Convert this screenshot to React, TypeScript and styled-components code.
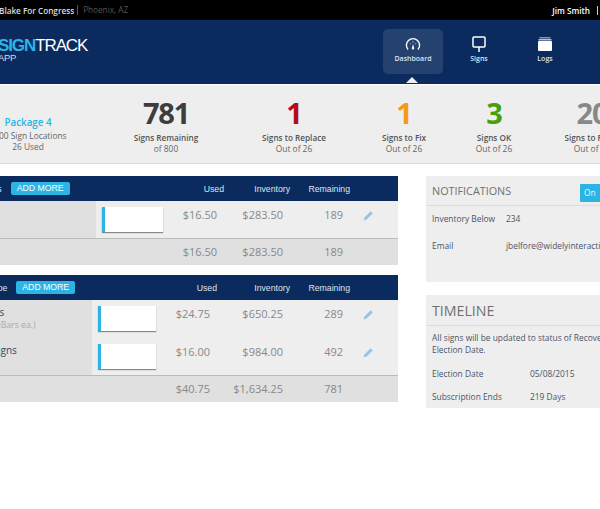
import styled, { createGlobalStyle } from "styled-components";

const GlobalStyle = createGlobalStyle`
  html, body {
    margin: 0;
    padding: 0;
    overflow: hidden;
    background: #fff;
  }
  * { box-sizing: border-box; }
`;

// the layout is wider than the window: it hangs over on both sides
const Page = styled.div`
  width: 740px;
  margin-left: -40px;
  font-family: "Open Sans", "Liberation Sans", sans-serif;
`;

const TopBar = styled.div`
  display: flex;
  align-items: center;
  height: 20px;
  padding: 0 102px 0 39px;
  background: #000;
  font-size: 8.2px;
  color: #fff;
`;

const Campaign = styled.span`
  font-weight: 600;
  color: #ddd;
`;

const Place = styled.span`
  margin-left: 3px;
  padding-left: 5px;
  border-left: 1px solid #555;
  line-height: 10px;
  color: #555;
`;

const UserName = styled.span`
  margin-left: auto;
  margin-right: 7px;
  font-weight: 600;
`;

const UserDivider = styled.span`
  width: 1px;
  height: 9px;
  background: #ccc;
`;

const Header = styled.header`
  display: flex;
  align-items: center;
  justify-content: space-between;
  position: relative;
  height: 64px;
  padding: 0 125px 0 38px;
  background: #0b2a5e;
`;

const Logo = styled.div`
  font-family: "Liberation Sans", Arial, sans-serif;
  color: #fff;
  margin-top: -4px;
`;

const LogoMain = styled.div`
  font-size: 17px;
  line-height: 15px;
  letter-spacing: -1.1px;
  font-weight: 400;

  b {
    color: #2bb4e4;
    font-weight: 700;
  }
`;

const LogoSub = styled.div`
  font-size: 9.5px;
  line-height: 9px;
  letter-spacing: -0.3px;
  color: #d5dbe6;
`;

const Nav = styled.nav`
  display: flex;
  gap: 6px;
  margin-top: -1px;
`;

const NavItem = styled.a<{ $active?: boolean }>`
  display: flex;
  flex-direction: column;
  align-items: center;
  position: relative;
  width: 60px;
  height: 45px;
  padding-top: 7px;
  border-radius: 5px;
  background: ${(p) => (p.$active ? "rgba(255,255,255,0.11)" : "transparent")};
  color: #dfe4ec;
  font-size: 7px;
  font-weight: 600;

  span {
    margin-top: 2px;
    line-height: 10px;
  }

  ${(p) =>
    p.$active &&
    `
    &::after {
      content: "";
      position: absolute;
      left: 23px;
      bottom: -9px;
      border-left: 6px solid transparent;
      border-right: 6px solid transparent;
      border-bottom: 6px solid #eee;
    }
  `}
`;

const Stats = styled.section`
  display: flex;
  height: 80px;
  border-top: 1px solid #fff;
  border-bottom: 1px solid #d9d9d9;
  background: #eee;
`;

const Stat = styled.div<{ $w: number }>`
  display: flex;
  flex-direction: column;
  align-items: center;
  justify-content: flex-end;
  flex: 0 0 ${(p) => p.$w}px;
  padding-bottom: 9px;
  white-space: nowrap;
  font-size: 8.4px;
  line-height: 11px;
  color: #666;
`;

const PackageStat = styled(Stat)`
  padding-bottom: 11px;
`;

const StatNumber = styled.div<{ $color: string }>`
  font-size: 29px;
  font-weight: 700;
  line-height: 34px;
  letter-spacing: -1.2px;
  margin-bottom: 2px;
  color: ${(p) => p.$color};
`;

const StatLabel = styled.div`
  font-size: 8.2px;
  font-weight: 600;
  color: #555;
`;

const PackageName = styled.div`
  font-size: 9.8px;
  font-weight: 600;
  line-height: 14px;
  color: #2bb4e4;
`;

const Body = styled.main`
  display: flex;
  gap: 28px;
  padding-top: 12px;
`;

const LeftColumn = styled.div`
  display: flex;
  flex-direction: column;
  gap: 10px;
  width: 438px;
`;

const RightColumn = styled.div`
  display: flex;
  flex-direction: column;
  gap: 13px;
  width: 274px;
`;

type Columns = { $first: number; $bar: number; $used: number; $inv: number };

const Row = styled.div<Columns>`
  display: grid;
  grid-template-columns: ${(p) => p.$first}px ${(p) => p.$bar}px ${(p) => p.$used}px ${(p) => p.$inv}px 60px 1fr;
  align-items: center;
`;

const HeadRow = styled(Row)`
  height: 25px;
  background: #0b2a5e;
  color: #dfe4ec;
  font-family: "Liberation Sans", Arial, sans-serif;
  font-size: 8.7px;
`;

const HeadTitle = styled.div`
  grid-column: 1 / 3;
  display: flex;
  align-items: center;
  padding-left: 4px;
  white-space: nowrap;
`;

const AddMore = styled.button`
  height: 13px;
  margin-left: 9px;
  padding: 0 6px;
  border: 0;
  border-radius: 2px;
  background: #2bb4e4;
  color: #fff;
  font-family: "Liberation Sans", Arial, sans-serif;
  font-size: 8.7px;
  line-height: 13px;
`;

const HeadCell = styled.div`
  text-align: right;
`;

const ItemRow = styled(Row)`
  align-items: start;
  background: #eee;
`;

const NameCell = styled.div<{ $h: number }>`
  display: flex;
  flex-direction: column;
  height: ${(p) => p.$h}px;
  padding: 6px 0 0 4px;
  background: #e0e0e0;
  font-size: 10px;
  line-height: 13px;
  color: #33476b;
  white-space: nowrap;

  small {
    font-size: 8.7px;
    color: #aaa;
  }
`;

const BarCell = styled.div`
  padding: 6px 0 0 6px;
`;

const BarTrack = styled.div<{ $w: number }>`
  width: ${(p) => p.$w}px;
  height: 25px;
  border-left: 3.5px solid #2bb4e4;
  background: #fff;
  box-shadow: 0 1px 1px #888;
`;

const Value = styled.div`
  padding-right: 7px;
  text-align: right;
  font-size: 11px;
  line-height: 15px;
  color: #888;
`;

const ItemValue = styled(Value)`
  padding-top: 6px;
`;

const EditCell = styled.div`
  display: flex;
  padding: 9px 0 0 13px;
`;

const TotalRow = styled(Row)`
  height: 27px;
  padding-bottom: 1px;
  border-top: 1px solid #bbb;
  background: #e0e0e0;
`;

const Panel = styled.section<{ $h: number }>`
  height: ${(p) => p.$h}px;
  background: #eee;
  font-size: 8.4px;
  color: #4a5568;
  white-space: nowrap;
`;

const PanelHead = styled.div<{ $h: number; $size: number }>`
  display: flex;
  align-items: center;
  justify-content: space-between;
  height: ${(p) => p.$h}px;
  padding: 0 0 0 6px;
  border-bottom: 1px solid #ddd;
  font-size: ${(p) => p.$size}px;
  color: #707070;
`;

const Toggle = styled.div`
  width: 194px;
  flex: 0 0 194px;
  height: 18px;
  margin-right: -74px;
  margin-top: 4px;
  padding-left: 4px;
  background: #2bb4e4;
  color: #eaf7fc;
  font-size: 8.4px;
  line-height: 18px;
  border-radius: 1px;
`;

const PanelRow = styled.div<{ $labelW: number; $h: number }>`
  display: grid;
  grid-template-columns: ${(p) => p.$labelW}px 1fr;
  align-items: center;
  height: ${(p) => p.$h}px;
  padding-left: 6px;
`;

const PanelNote = styled.p`
  margin: 0;
  padding: 6px 0 5px 6px;
  line-height: 12px;
`;

const GaugeIcon = () => (
  <svg width="16" height="16" viewBox="0 0 16 16" fill="none" stroke="#fff">
    <path d="M3 13.5 A6.6 6.6 0 1 1 13 13.5" strokeWidth="1.4" />
    <path d="M4.8 7.2 L5.7 8 M8 5.4 V6.6 M11.2 7.2 L10.3 8" strokeWidth="0.8" />
    <path d="M8 8 L9 11.6 A1.2 1.2 0 1 1 7 11.6 Z" fill="#fff" stroke="none" />
  </svg>
);

const SignIcon = () => (
  <svg width="16" height="16" viewBox="0 0 16 16" fill="none" stroke="#fff">
    <rect x="2" y="1" width="12" height="10" rx="1" strokeWidth="1.5" />
    <path d="M8 11 V16" strokeWidth="1.5" />
  </svg>
);

const LogsIcon = () => (
  <svg width="16" height="16" viewBox="0 0 16 16" fill="#fff">
    <rect x="2.5" y="1" width="11" height="1.5" fill="#8794ab" />
    <rect x="1.5" y="3" width="13" height="1.5" fill="#b9c1cf" />
    <rect x="1" y="5" width="14" height="10" rx="1" />
  </svg>
);

const PencilIcon = () => (
  <svg width="11" height="11" viewBox="0 0 11 11" fill="#9ac3e0">
    <path d="M7.6 1.2 L9.8 3.4 L3.6 9.6 L0.6 10.4 L1.4 7.4 Z" />
  </svg>
);

type Item = { name: string; note?: string; used: string; inventory: string; remaining: string };

const firstItems: Item[] = [{ name: "Stakes", used: "$16.50", inventory: "$283.50", remaining: "189" }];

const secondItems: Item[] = [
  { name: "LineBars", note: "(100 LineBars ea.)", used: "$24.75", inventory: "$650.25", remaining: "289" },
  { name: "Large Signs", used: "$16.00", inventory: "$984.00", remaining: "492" },
];

const stats = [
  { w: 140, value: "781", color: "#3d3d3d", label: "Signs Remaining", sub: "of 800" },
  { w: 116, value: "1", color: "#b00d17", label: "Signs to Replace", sub: "Out of 26" },
  { w: 104, value: "1", color: "#f39c12", label: "Signs to Fix", sub: "Out of 26" },
  { w: 76, value: "3", color: "#45a00f", label: "Signs OK", sub: "Out of 26" },
  { w: 120, value: "20", color: "#888", label: "Signs to Reset", sub: "Out of 26" },
];

function SignTable(props: {
  title: string;
  columns: Columns;
  barW: number;
  rowH: number;
  items: Item[];
  total: Omit<Item, "name">;
}) {
  const { title, columns, barW, rowH, items, total } = props;

  return (
    <div>
      <HeadRow {...columns}>
        <HeadTitle>
          {title}
          <AddMore>ADD MORE</AddMore>
        </HeadTitle>
        <HeadCell>Used</HeadCell>
        <HeadCell>Inventory</HeadCell>
        <HeadCell>Remaining</HeadCell>
      </HeadRow>
      {items.map((item) => (
        <ItemRow key={item.name} {...columns}>
          <NameCell $h={rowH}>
            {item.name}
            {item.note && <small>{item.note}</small>}
          </NameCell>
          <BarCell>
            <BarTrack $w={barW} />
          </BarCell>
          <ItemValue>{item.used}</ItemValue>
          <ItemValue>{item.inventory}</ItemValue>
          <ItemValue>{item.remaining}</ItemValue>
          <EditCell>
            <PencilIcon />
          </EditCell>
        </ItemRow>
      ))}
      <TotalRow {...columns}>
        <div />
        <div />
        <Value>{total.used}</Value>
        <Value>{total.inventory}</Value>
        <Value>{total.remaining}</Value>
      </TotalRow>
    </div>
  );
}

export default function App() {
  return (
    <Page>
      <GlobalStyle />
      <TopBar>
        <Campaign>Blake For Congress</Campaign>
        <Place>Phoenix, AZ</Place>
        <UserName>Jim Smith</UserName>
        <UserDivider />
      </TopBar>
      <Header>
        <Logo>
          <LogoMain>
            <b>SIGN</b>TRACK
          </LogoMain>
          <LogoSub>APP</LogoSub>
        </Logo>
        <Nav>
          <NavItem $active>
            <GaugeIcon />
            <span>Dashboard</span>
          </NavItem>
          <NavItem>
            <SignIcon />
            <span>Signs</span>
          </NavItem>
          <NavItem>
            <LogsIcon />
            <span>Logs</span>
          </NavItem>
        </Nav>
      </Header>
      <Stats>
        <PackageStat $w={136}>
          <PackageName>Package 4</PackageName>
          <div>1000 Sign Locations</div>
          <div>26 Used</div>
        </PackageStat>
        {stats.map((s) => (
          <Stat key={s.label} $w={s.w}>
            <StatNumber $color={s.color}>{s.value}</StatNumber>
            <StatLabel>{s.label}</StatLabel>
            <div>{s.sub}</div>
          </Stat>
        ))}
      </Stats>
      <Body>
        <LeftColumn>
          <SignTable
            title="Old Signs"
            columns={{ $first: 136, $bar: 80, $used: 48, $inv: 66 }}
            barW={61}
            rowH={37}
            items={firstItems}
            total={{ used: "$16.50", inventory: "$283.50", remaining: "189" }}
          />
          <SignTable
            title="Stake Type"
            columns={{ $first: 132, $bar: 76, $used: 49, $inv: 73 }}
            barW={58}
            rowH={37.5}
            items={secondItems}
            total={{ used: "$40.75", inventory: "$1,634.25", remaining: "781" }}
          />
        </LeftColumn>
        <RightColumn>
          <Panel $h={106}>
            <PanelHead $h={30} $size={10.8}>
              NOTIFICATIONS
              <Toggle>On</Toggle>
            </PanelHead>
            <PanelRow $labelW={74} $h={24}>
              <span>Inventory Below</span>
              <span>234</span>
            </PanelRow>
            <PanelRow $labelW={74} $h={30}>
              <span>Email</span>
              <span>jbelfore@widelyinteractive.com</span>
            </PanelRow>
          </Panel>
          <Panel $h={113}>
            <PanelHead $h={31} $size={14.2}>
              TIMELINE
            </PanelHead>
            <PanelNote>
              All signs will be updated to status of Recovered on
              <br />
              Election Date.
            </PanelNote>
            <PanelRow $labelW={98} $h={24}>
              <span>Election Date</span>
              <span>05/08/2015</span>
            </PanelRow>
            <PanelRow $labelW={98} $h={22}>
              <span>Subscription Ends</span>
              <span>219 Days</span>
            </PanelRow>
          </Panel>
        </RightColumn>
      </Body>
    </Page>
  );
}
